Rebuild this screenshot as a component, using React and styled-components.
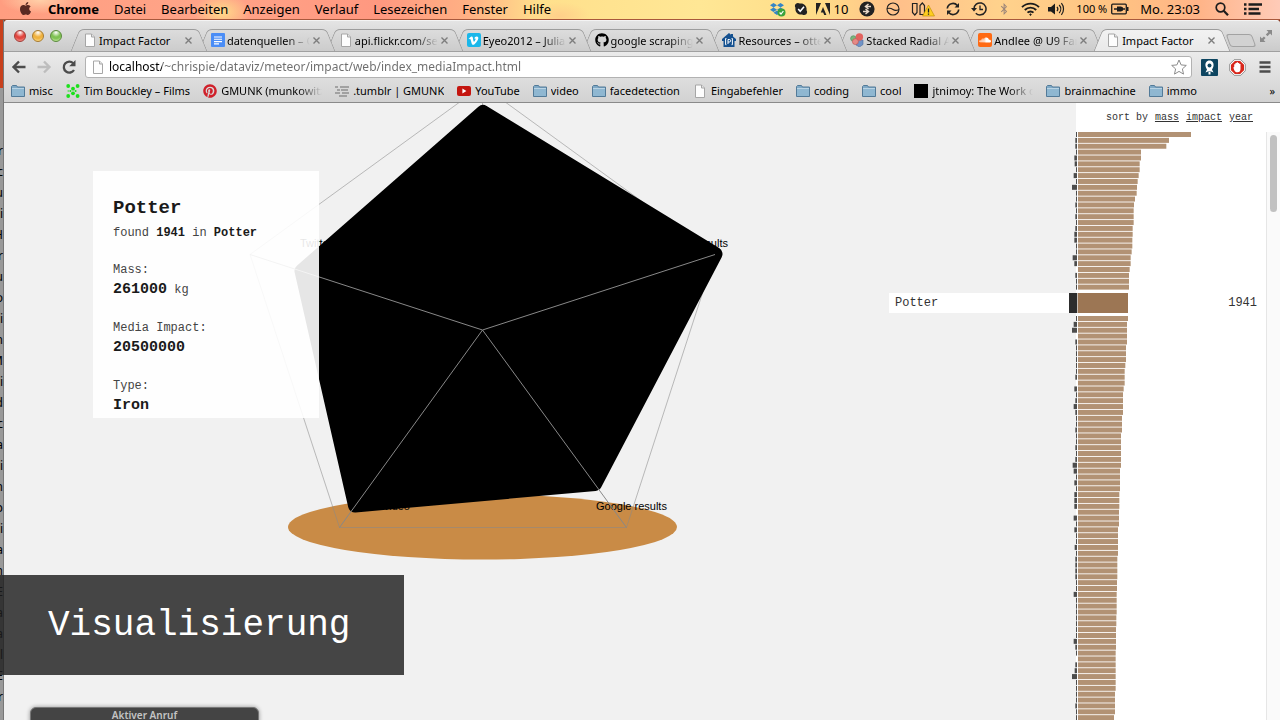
import React from 'react';
import styled, { createGlobalStyle, css } from 'styled-components';
import { FaApple, FaDropbox, FaSkype, FaBluetoothB, FaVimeoV, FaGithub, FaSoundcloud, FaPinterest } from 'react-icons/fa';

const ui = '"Noto Sans", "Open Sans", sans-serif';
const mono = '"Liberation Mono", "Courier New", monospace';

const GlobalStyle = createGlobalStyle`
  * { box-sizing: border-box; }
  body { margin: 0; background: #8a3a20; font-family: ${ui}; color: #000; overflow: hidden; }
  button, input { font: inherit; color: inherit; border: 0; padding: 0; margin: 0; background: none; }
  a { color: inherit; text-decoration: none; }
  svg { display: block; flex: none; }
`;

/* ---------- shell ---------- */
const Desktop = styled.div`
  position: relative;
  height: 100vh;
  display: flex;
  flex-direction: column;
  overflow: hidden;
`;
const Row = styled.div`
  flex: 1;
  min-height: 0;
  display: flex;
`;
const Behind = styled.div`
  width: 4px;
  overflow: hidden;
  background: linear-gradient(#c8401c 0 68px, #999 68px);
  border-right: 1px solid #777;
  padding-top: 120px;
  display: flex;
  flex-direction: column;
  align-items: flex-end;
  font-size: 12px;
  line-height: 21px;
`;
const Window = styled.div`
  flex: 1;
  min-width: 0;
  display: flex;
  flex-direction: column;
  background: #f1f1f1;
  border-radius: 4px 4px 0 0;
  overflow: hidden;
`;

/* ---------- menu bar ---------- */
const MenuBar = styled.header`
  height: 20px;
  flex: none;
  display: flex;
  justify-content: space-between;
  align-items: center;
  padding: 0 18px 2px;
  font-size: 13px;
  line-height: 18px;
  border-bottom: 1px solid #a8583c;
  background:
    radial-gradient(ellipse 28px 18px at 222px 12px, #ffe98acc, transparent),
    radial-gradient(ellipse 40px 14px at 40px 0, #ffd0a8, transparent),
    radial-gradient(ellipse 30px 14px at 560px 16px, #ffcf8a, transparent),
    linear-gradient(90deg, #ff9d80 0, #ffa488 200px, #ff9880 380px, #ffb184 470px, #ffe08c 540px, #ffe795 700px, #ffdc88 820px, #ffc08a 900px, #ffd28c 1000px, #ffc282 1120px, #ffb488 1200px, #ffcbb8 100%);
`;
const MenuGroup = styled.div`
  display: flex;
  align-items: center;
  gap: 15px;
`;
const MenuItem = styled.button`
  font-weight: ${(p) => (p.$bold ? 700 : 400)};
  white-space: nowrap;
`;
const StatusGroup = styled.div`
  display: flex;
  align-items: center;
  gap: ${(p) => p.$gap}px;
  white-space: nowrap;
`;
const Small = styled.span`
  font-size: 11px;
`;

/* ---------- tabs ---------- */
const TabBar = styled.div`
  height: 32px;
  flex: none;
  display: flex;
  align-items: flex-end;
  background: linear-gradient(#e4e4e4, #cbcbcb);
  border-top: 1px solid #f4f4f4;
  border-bottom: 1px solid #a0a0a0;
`;
const Lights = styled.div`
  width: 71px;
  flex: none;
  display: flex;
  gap: 6px;
  padding: 0 0 9px 10px;
`;
const Light = styled.button`
  width: 12px;
  height: 12px;
  border-radius: 50%;
  border: 1px solid ${(p) => p.$edge};
  background: radial-gradient(circle at 50% 15%, #fff 0, ${(p) => p.$fill} 45%, ${(p) => p.$fill} 60%, ${(p) => p.$glow} 100%);
`;
const Tabs = styled.nav`
  flex: 1;
  min-width: 0;
  display: flex;
`;
const edge = css`
  content: '';
  position: absolute;
  z-index: -1;
  top: 0;
  bottom: 0;
  background: ${(p) => (p.$active ? 'linear-gradient(#f2f2f2, #e9e9e9)' : 'linear-gradient(#dcdcdc, #cccccc)')};
  border-top: 1px solid #9c9c9c;
`;
const Tab = styled.div`
  position: relative;
  z-index: ${(p) => p.$z};
  isolation: isolate;
  flex: 1;
  min-width: 0;
  height: 22px;
  margin-bottom: ${(p) => (p.$active ? -1 : 0)}px;
  padding: 0 10px 0 8px;
  display: flex;
  align-items: center;
  gap: 2px;
  font-size: 11px;
  &::before {
    ${edge}
    left: 0;
    right: 40%;
    transform: skewX(-22deg);
    border-left: 1px solid #9c9c9c;
    border-top-left-radius: 5px;
  }
  &::after {
    ${edge}
    left: 40%;
    right: 0;
    transform: skewX(22deg);
    border-right: 1px solid #9c9c9c;
    border-top-right-radius: 5px;
  }
`;
const TabLabel = styled.button`
  flex: 1;
  min-width: 0;
  display: flex;
  align-items: center;
  gap: 2px;
  text-align: left;
`;
const Fade = styled.span`
  flex: 1;
  min-width: 0;
  max-width: ${(p) => (p.$max ? p.$max + 'px' : 'none')};
  overflow: hidden;
  white-space: nowrap;
  ${(p) => p.$on && css`mask-image: linear-gradient(90deg, #000 calc(100% - 24px), transparent);`}
`;
const Close = styled.button`
  width: 9px;
  height: 9px;
  flex: none;
`;
const TabEnd = styled.div`
  width: 54px;
  flex: none;
  display: flex;
  justify-content: space-between;
  padding: 0 7px 4px 2px;
`;
const NewTab = styled.button`
  width: 26px;
  height: 13px;
  align-self: flex-end;
  border: 1px solid #a2a2a2;
  border-radius: 3px;
  background: #d2d2d2;
  transform: skewX(20deg);
`;
const Expand = styled.button`
  width: 14px;
  height: 22px;
`;

/* ---------- toolbar ---------- */
const Toolbar = styled.div`
  height: 30px;
  flex: none;
  display: flex;
  align-items: center;
  padding: 0 7px;
  background: linear-gradient(#ebebeb, #dcdcdc);
`;
const IconButton = styled.button`
  width: 16px;
  height: 16px;
  margin-right: ${(p) => p.$gap || 0}px;
`;
const Omnibox = styled.label`
  flex: 1;
  min-width: 0;
  height: 22px;
  display: flex;
  align-items: center;
  gap: 4px;
  padding: 0 4px 0 5px;
  margin-right: 9px;
  background: #fff;
  border: 1px solid #b2b2b2;
  border-radius: 3px;
`;
const Url = styled.input`
  flex: 1;
  min-width: 0;
  font-size: 12px;
  line-height: 18px;
  color: transparent;
  background: linear-gradient(90deg, #000 53px, #6c6c6c 53px);
  -webkit-background-clip: text;
  background-clip: text;
`;

/* ---------- bookmarks ---------- */
const Bookmarks = styled.nav`
  height: 21px;
  flex: none;
  display: flex;
  align-items: center;
  gap: 13px;
  padding: 0 5px 3px 7px;
  font-size: 11px;
  background: linear-gradient(#dcdcdc, #d2d2d2);
  border-bottom: 1px solid #8a8a8a;
`;
const Bookmark = styled.a`
  display: flex;
  align-items: center;
  gap: 4px;
  white-space: nowrap;
`;
const More = styled.button`
  margin-left: auto;
`;
const BlackTile = styled.span`
  width: 14px;
  height: 14px;
  background: #000;
`;

/* ---------- page ---------- */
const Page = styled.main`
  flex: 1;
  min-height: 0;
  display: flex;
`;
const Canvas = styled.section`
  position: relative;
  flex: 1;
  min-width: 0;
  overflow: hidden;
`;
const Radar = styled.svg`
  width: 100%;
`;
const RadarLabel = styled.text`
  font: 11px "Liberation Sans", Arial, sans-serif;
  text-anchor: ${(p) => p.$anchor || 'start'};
`;
const Card = styled.article`
  position: absolute;
  left: 89px;
  top: 68px;
  width: 226px;
  height: 247px;
  overflow: hidden;
  padding: 25px 20px 0;
  background: rgba(255, 255, 255, 0.9);
  font-family: ${mono};
  font-size: 12px;
  color: #444;
  b, strong { color: #1a1a1a; }
`;
const CardTitle = styled.h1`
  margin: 0;
  font-size: 19px;
  line-height: 24px;
  color: #1a1a1a;
`;
const Found = styled.p`
  margin: 4px 0 0;
  line-height: 18px;
`;
const Facts = styled.dl`
  margin: 0;
`;
const Term = styled.dt`
  margin-top: 18px;
  line-height: 20px;
`;
const Value = styled.dd`
  margin: 0;
  line-height: 20px;
  strong { font-size: 15px; }
`;

const Side = styled.aside`
  position: relative;
  width: 204px;
  flex: none;
  background: #fff;
  font-family: ${mono};
  color: #333;
`;
const Sort = styled.div`
  height: 29px;
  display: flex;
  justify-content: flex-end;
  align-items: center;
  gap: 7px;
  padding-right: 27px;
  font-size: 10px;
  a { text-decoration: underline; }
`;
const Scroller = styled.div`
  display: flex;
`;
const List = styled.div`
  flex: 1;
  min-width: 0;
`;
const Track = styled.div`
  width: 14px;
  height: 100vh;
  padding: 3px 3px 0;
  background: #fafafa;
  border-left: 1px solid #e6e6e6;
`;
const Thumb = styled.div`
  width: 7px;
  height: 77px;
  border-radius: 4px;
  background: #c1c1c1;
`;
const Bars = styled.svg`
  width: 100%;
  overflow: visible;
`;
const Selected = styled.div`
  position: relative;
  height: 20px;
  margin: 3px 0;
  display: flex;
  align-items: center;
  font-size: 12px;
`;
const SelectedName = styled.div`
  position: absolute;
  right: 100%;
  width: 187px;
  height: 20px;
  display: flex;
  align-items: center;
  justify-content: space-between;
  padding-left: 6px;
  background: #fff;
`;
const Mark = styled.span`
  width: ${(p) => p.$w}px;
  height: 20px;
  background: ${(p) => p.$c};
`;
const Year = styled.span`
  margin-left: auto;
  padding-right: 9px;
`;

const Caption = styled.div`
  position: absolute;
  left: 0;
  bottom: 45px;
  width: 404px;
  height: 100px;
  padding: 2px 0 0 48px;
  display: flex;
  align-items: center;
  background: rgba(31, 31, 31, 0.82);
  color: #fff;
  font: 36px/40px ${mono};
`;
const Call = styled.div`
  position: absolute;
  left: 30px;
  bottom: -8px;
  width: 229px;
  height: 21px;
  border-radius: 6px;
  border: 1px solid #777;
  background: #444;
  box-shadow: 0 0 4px #0006;
  color: #c4c4c4;
  font-size: 10px;
  font-weight: 600;
  line-height: 15px;
  text-align: center;
`;

/* ---------- icons ---------- */
const FileIcon = () => (
  <svg width="14" height="14" viewBox="0 0 14 14"><path d="M2.5 1h6l3 3v9.5h-9z" fill="#fdfdfd" stroke="#a6a6a6" /><path d="M8.5 1v3h3" fill="#e4e4e4" stroke="#a6a6a6" /></svg>
);
const FolderIcon = () => (
  <svg width="14" height="14" viewBox="0 0 14 14"><path d="M.5 12.5v-10l1-1h4l1 1.5h7v9.5z" fill="#7fa9c6" stroke="#527a98" /><path d="M1 5h12v7H1z" fill="#8fb7d1" /><path d="M1 4.5h12" stroke="#b9d3e4" /></svg>
);
const DocsIcon = () => (
  <svg width="14" height="14" viewBox="0 0 14 14"><rect width="14" height="14" rx="1" fill="#4a8df6" /><path d="M3 4h8M3 6.3h8M3 8.6h8M3 10.9h5" stroke="#fff" strokeWidth="1.1" /></svg>
);
const TileIcon = styled.span`
  width: 14px;
  height: 14px;
  flex: none;
  display: flex;
  align-items: center;
  justify-content: center;
  color: #fff;
  border-radius: 2px;
  background: ${(p) => p.$c};
`;
const HouseIcon = () => (
  <svg width="14" height="14" viewBox="0 0 14 14"><path d="M7 0l2 1.8V1h2v2.6L14 6v2h-1.5v6h-11V8H0V6z" fill="#14508f" /><path d="M4.4 5.5H3.6v6.2h.8M9.6 5.5h.8v6.2h-.8M6 11V6.5h1.4a1.2 1.2 0 010 2.500H6" fill="none" stroke="#fff" strokeWidth="1" /></svg>
);
const RadialIcon = () => (
  <svg width="14" height="14" viewBox="0 0 14 14"><circle cx="3.4" cy="5.5" r="2.8" fill="#79b67c" stroke="#4e8c5b" strokeWidth=".6" /><path d="M6 7h7v4.5L9.5 14 6 12z" fill="#6f93c6" stroke="#4a6ba0" strokeWidth=".6" /><circle cx="9.4" cy="4" r="3.7" fill="#e2635f" /><circle cx="5.4" cy="8.6" r="3" fill="#e58a86" stroke="#c14e4c" strokeWidth=".6" /></svg>
);
const DotsIcon = () => (
  <svg width="14" height="14" viewBox="0 0 14 14" fill="#1ce01c"><circle cx="2.2" cy="2" r="1.9" /><circle cx="11.6" cy="2" r="1.9" /><circle cx="7" cy="4.700" r="1.900" /><circle cx="2.200" cy="7" r="0.700" /><circle cx="4.400" cy="7" r="1" /><circle cx="9.600" cy="7" r="1" /><circle cx="7" cy="9.300" r="1.900" /><circle cx="2.2" cy="12" r="1.9" /><circle cx="11.6" cy="12" r="1.9" /></svg>
);
const LinesIcon = () => (
  <svg width="14" height="14" viewBox="0 0 14 14"><path d="M0 3h3M5 3h9M2 6h3M6 6h7M0 9h5M7 9h7M4 12h8" stroke="#909090" strokeWidth="1.3" /></svg>
);
const TubeIcon = () => (
  <svg width="14" height="14" viewBox="0 0 14 14"><rect y="2" width="14" height="10" rx="2" fill="#c4150f" /><path d="M5.4 4.6v4.8L9.4 7z" fill="#fff" /></svg>
);
const CloseIcon = () => (
  <svg width="9" height="9" viewBox="0 0 9 9"><path d="M1.5 1.5l6 6M7.5 1.5l-6 6" stroke="#7d7d7d" strokeWidth="1.4" /></svg>
);

const tabs = [
  { label: 'Impact Factor', icon: <FileIcon /> },
  { label: 'datenquellen – Google', icon: <DocsIcon />, fade: true },
  { label: 'api.flickr.com/services', icon: <FileIcon />, fade: true },
  { label: 'Eyeo2012 – Julian O', icon: <TileIcon $c="#1ab7ea"><FaVimeoV size={11} /></TileIcon>, fade: true },
  { label: 'google scraping · G', icon: <FaGithub size={14} />, fade: true },
  { label: 'Resources – otterbox', icon: <HouseIcon />, fade: true },
  { label: 'Stacked Radial Area', icon: <RadialIcon />, fade: true },
  { label: 'Andlee @ U9 Family', icon: <TileIcon $c="#ff6a13"><FaSoundcloud size={12} /></TileIcon>, fade: true },
  { label: 'Impact Factor', icon: <FileIcon />, active: true },
];

const bookmarks = [
  { label: 'misc', icon: <FolderIcon /> },
  { label: 'Tim Bouckley – Films', icon: <DotsIcon /> },
  { label: 'GMUNK (munkowitz)', icon: <FaPinterest size={14} color="#d0202a" />, max: 101 },
  { label: '.tumblr | GMUNK', icon: <LinesIcon /> },
  { label: 'YouTube', icon: <TubeIcon /> },
  { label: 'video', icon: <FolderIcon /> },
  { label: 'facedetection', icon: <FolderIcon /> },
  { label: 'Eingabefehler', icon: <FileIcon /> },
  { label: 'coding', icon: <FolderIcon /> },
  { label: 'cool', icon: <FolderIcon /> },
  { label: 'jtnimoy: The Work of J', icon: <BlackTile />, max: 101 },
  { label: 'brainmachine', icon: <FolderIcon /> },
  { label: 'immo', icon: <FolderIcon /> },
];

/* [impact, mass] of each meteorite, in thirds of a pixel */
const before = [
  [3, 339], [5, 273], [5, 265], [3, 189], [8, 189], [7, 185], [3, 185], [10, 182], [3, 179], [15, 177], [3, 176], [3, 171], [5, 168], [3, 167],
  [5, 167], [3, 167], [5, 164], [8, 164], [8, 163], [3, 163], [3, 161], [13, 158], [8, 158], [0, 155], [5, 153], [3, 153], [3, 153],
];
const after = [
  [3, 150], [10, 147], [15, 147], [0, 147], [5, 147], [3, 144], [3, 144], [3, 144], [3, 142], [3, 140], [5, 140], [0, 140], [8, 137], [3, 135],
  [5, 135], [10, 135], [5, 135], [3, 132], [3, 132], [5, 132], [3, 129], [3, 129], [5, 129], [3, 129], [5, 129], [13, 129], [10, 126], [3, 126],
  [8, 126], [3, 126], [8, 124], [8, 124], [8, 124], [0, 123], [10, 123], [3, 123], [8, 120], [3, 120], [3, 120], [7, 120], [3, 120], [5, 118],
  [5, 118], [5, 118], [5, 118], [3, 117], [3, 117], [10, 116], [3, 116], [3, 116], [3, 116], [3, 115], [3, 115], [3, 114], [3, 114], [10, 114],
  [5, 114], [3, 113], [0, 113], [5, 113], [7, 113], [15, 113], [3, 113], [3, 113], [3, 111], [3, 111], [5, 111], [3, 111], [3, 108],
];
const PITCH = 5.87;

const BarChart = ({ rows, height }) => (
  <Bars height={height} aria-hidden="true">
    {rows.map(([impact, mass], i) => (
      <g key={i}>
        <rect x={1 - impact / 3} y={i * PITCH} width={impact / 3} height="5" fill="#4d4d4d" />
        <rect x="2" y={i * PITCH} width={mass / 3} height="5" fill="#b29274" />
      </g>
    ))}
  </Bars>
);

const behindLetters = ['r', 'c', 'u', 'i', 'H', 'r', 'u', 'o', 'i', 'n', 'M', 'i', 'd', 'c', 'a', 'i', 'n', 'p', 'i', 'a', 'n', 'E', 'a', 'a', 'l', 'E', 'r'];

export default function App() {
  return (
    <Desktop>
      <GlobalStyle />
      <MenuBar>
        <MenuGroup>
          <FaApple size={15} color="#5a2a22" />
          <MenuItem $bold>Chrome</MenuItem>
          {['Datei', 'Bearbeiten', 'Anzeigen', 'Verlauf', 'Lesezeichen', 'Fenster', 'Hilfe'].map((m) => (
            <MenuItem key={m}>{m}</MenuItem>
          ))}
        </MenuGroup>
        <StatusGroup $gap={11}>
          <StatusGroup $gap={8}>
            <svg width="16" height="16" viewBox="0 0 16 16"><g transform="translate(0 1)" color="#3585c6"><FaDropbox size={14} /></g><circle cx="11.5" cy="11.5" r="4" fill="#3ba33b" /><path d="M9.6 11.5l1.4 1.5 2.4-3" stroke="#fff" fill="none" strokeWidth="1.2" /></svg>
            <svg width="14" height="14" viewBox="0 0 14 14"><FaSkype size={14} color="#222" /><circle cx="7" cy="7" r="4.6" fill="#222" /><path d="M4.2 7l2 2.2L10 4.8" stroke="#fff" fill="none" strokeWidth="1.6" /></svg>
            <StatusGroup $gap={3}>
              <svg width="14" height="12" viewBox="0 0 14 12" fill="#222"><path d="M0 0h5L0 12zM9 0h5v12zM7 4l3.4 8H8.2l-1-2.5H4.8z" /></svg>
              <span>10</span>
            </StatusGroup>
          </StatusGroup>
          <svg width="16" height="16" viewBox="0 0 16 16"><circle cx="8" cy="8" r="7.6" fill="#222" /><path d="M9.500 3L6.500 5.500 9.500 8M6.500 5.500H12M6.500 8l3 2.500-3 2.500M9.500 10.500H4" stroke="#e8d8c8" fill="none" strokeWidth="1.500" /></svg>
          <svg width="14" height="14" viewBox="0 0 14 14" fill="none" stroke="#222" strokeWidth="1.1"><circle cx="7" cy="7" r="6" /><path d="M1 6.500c2-.5 4-.5 6 1s4 1 6 0" /></svg>
          <svg width="24" height="16" viewBox="0 0 24 16"><path d="M1.5 2.5h4.5v9L3.8 14l-2.3-2.5zM9 13.5h4.5v-9L11.300 2 9 4.500z" fill="none" stroke="#222" strokeWidth="1.2" /><path d="M17.500 4l6 11h-12z" fill="#ffce1f" stroke="#b98a00" strokeWidth=".6" /><path d="M17.500 7.500v4M17.500 12.500v1.300" stroke="#222" strokeWidth="1.300" /></svg>
          <svg width="14" height="14" viewBox="0 0 14 14"><path d="M1.300 6.500a5.700 5.700 0 0110-3M12.700 7.500a5.700 5.700 0 01-10 3" fill="none" stroke="#222" strokeWidth="1.700" /><path d="M13 1v4.500H8.500zM1 13V8.500h4.500z" fill="#222" /></svg>
          <svg width="16" height="14" viewBox="0 0 16 14"><path d="M3 7a6 6 0 111.800 4.200" fill="none" stroke="#222" strokeWidth="1.500" /><path d="M0 6h6L3 9.500z" fill="#222" /><path d="M9 3.500V7.500h3" fill="none" stroke="#222" strokeWidth="1.300" /></svg>
          <FaBluetoothB size={12} color="#9b8579" />
          <StatusGroup $gap={8}>
            <svg width="19" height="14" viewBox="0 0 19 14" fill="none" stroke="#1c1c1c" strokeWidth="1.900"><path d="M1 5.200a12 12 0 0117 0M3.800 8a8 8 0 0111.400 0M6.500 10.700a4.200 4.200 0 016 0" /><circle cx="9.500" cy="12.600" r=".7" fill="#1c1c1c" strokeWidth="1" /></svg>
            <svg width="17" height="14" viewBox="0 0 17 14"><path d="M0 5h3l4-3.500v11L3 9.500H0z" fill="#1c1c1c" /><path d="M9 4.800a3.500 3.500 0 010 4.400M11.200 3a6 6 0 010 8M13.400 1.200a9 9 0 010 11.600" fill="none" stroke="#1c1c1c" strokeWidth="1.200" /></svg>
          </StatusGroup>
          <StatusGroup $gap={4}>
            <Small>100 %</Small>
            <svg width="18" height="12" viewBox="0 0 18 12"><rect x=".7" y="1.200" width="14.600" height="9.600" rx="1" fill="none" stroke="#1c1c1c" strokeWidth="1.300" /><path d="M16 4h1.500v4H16z" fill="#1c1c1c" /><path d="M3 6h3M11 6h3" stroke="#1c1c1c" strokeWidth="1.500" /><path d="M6 3.500h4l2 1v3l-2 1H6z" fill="#1c1c1c" /></svg>
          </StatusGroup>
          <StatusGroup $gap={15}>
            <span>Mo. 23:03</span>
            <svg width="14" height="14" viewBox="0 0 14 14" fill="none" stroke="#1c1c1c"><circle cx="5.500" cy="5.500" r="4.300" strokeWidth="1.700" /><path d="M8.700 8.700l4.300 4.500" strokeWidth="2.200" /></svg>
            <svg width="18" height="12" viewBox="0 0 18 12"><path d="M0 1.500h2.500M0 6h2.500M0 10.500h2.500M4.500 1.500H18M4.500 6H15M4.500 10.500h12" stroke="#1c1c1c" strokeWidth="2.300" /></svg>
          </StatusGroup>
        </StatusGroup>
      </MenuBar>

      <Row>
        <Behind aria-hidden="true">
          {behindLetters.map((l, i) => <span key={i}>{l}</span>)}
        </Behind>
        <Window>
          <TabBar>
            <Lights>
              <Light aria-label="Schließen" $edge="#a03a36" $fill="#e2463f" $glow="#ffb0a8" />
              <Light aria-label="Minimieren" $edge="#a87a2e" $fill="#f0b23e" $glow="#ffeaa0" />
              <Light aria-label="Zoomen" $edge="#5a8a3c" $fill="#7fc252" $glow="#d8f7b4" />
            </Lights>
            <Tabs>
              {tabs.map((t, i) => (
                <Tab key={i} $active={t.active} $z={t.active ? 20 : 10 - i}>
                  <TabLabel>
                    {t.icon}
                    <Fade $on={t.fade}>{t.label}</Fade>
                  </TabLabel>
                  <Close aria-label="Tab schließen"><CloseIcon /></Close>
                </Tab>
              ))}
            </Tabs>
            <TabEnd>
              <NewTab aria-label="Neuer Tab" />
              <Expand aria-label="Vollbild">
                <svg width="14" height="14" viewBox="0 0 14 14" fill="#8a8a8a"><path d="M7.500 1H13v5.500l-1.900-1.900-2.600 2.600-1.700-1.700 2.600-2.600zM6.500 13H1V7.500l1.900 1.900 2-2 1.700 1.700-2 2z" /></svg>
              </Expand>
            </TabEnd>
          </TabBar>

          <Toolbar>
            <IconButton aria-label="Zurück" $gap={9}>
              <svg width="16" height="16" viewBox="0 0 16 16" fill="none" stroke="#4c4c4c" strokeWidth="2.400"><path d="M14.500 8H3M8 2.500L2.500 8 8 13.500" /></svg>
            </IconButton>
            <IconButton aria-label="Vor" $gap={9}>
              <svg width="16" height="16" viewBox="0 0 16 16" fill="none" stroke="#bdbdbd" strokeWidth="2.400"><path d="M1.500 8H13M8 2.500L13.500 8 8 13.500" /></svg>
            </IconButton>
            <IconButton aria-label="Neu laden" $gap={8}>
              <svg width="16" height="16" viewBox="0 0 16 16"><path d="M13 11a5.500 5.500 0 11-.8-6.800" fill="none" stroke="#4c4c4c" strokeWidth="2.300" /><path d="M14.500 1v6.300H8.200z" fill="#4c4c4c" /></svg>
            </IconButton>
            <Omnibox>
              <FileIcon />
              <Url aria-label="Adresse" defaultValue="localhost/~chrispie/dataviz/meteor/impact/web/index_mediaImpact.html" />
              <svg width="16" height="16" viewBox="0 0 16 16"><path d="M8 1l2.100 4.900 5.200.5-3.900 3.500 1.100 5.200L8 12.400l-4.500 2.700 1.100-5.200L.7 6.400l5.200-.5z" fill="#fff" stroke="#8c8c8c" /></svg>
            </Omnibox>
            <IconButton aria-label="Erweiterung" $gap={12}>
              <svg width="17" height="17" viewBox="0 0 17 17"><rect width="17" height="17" rx="1" fill="#0d4560" /><path d="M8.500 1.500c3 0 4.500 2.500 4 5.500-.3 1.500-1 2.500-1.500 3.500l1.500 3-2.500-1H7l-2.500 1 1.500-3C5.500 9.500 4.800 8.500 4.500 7c-.5-3 1-5.500 4-5.500z" fill="#fff" /><circle cx="8.500" cy="6.500" r="2" fill="#0d4560" /><path d="M7.500 13h2v2.500h-2z" fill="#fff" /></svg>
            </IconButton>
            <IconButton aria-label="Werbeblocker" $gap={12}>
              <svg width="17" height="17" viewBox="0 0 17 17"><path d="M5.200.7h6.600l4.500 4.500v6.600l-4.500 4.500H5.200L.7 11.800V5.200z" fill="#fff" stroke="#777" strokeWidth=".8" /><path d="M5.800 2h5.400L15 5.800v5.400L11.200 15H5.800L2 11.200V5.800z" fill="#d8281c" /><path d="M5.200 8V5.200h1.200V4h1.300v-.7H9V4h1.300v1h1.200v5c0 2-1 3.300-3 3.300-1.800 0-2.600-.8-3.300-2.300L4.300 8.600z" fill="#fff" /></svg>
            </IconButton>
            <IconButton aria-label="Menü">
              <svg width="16" height="16" viewBox="0 0 16 16"><path d="M2.500 3.500h11M2.500 8h11M2.500 12.500h11" stroke="#4c4c4c" strokeWidth="2.300" /></svg>
            </IconButton>
          </Toolbar>

          <Bookmarks>
            {bookmarks.map((b) => (
              <Bookmark key={b.label} href="#">
                {b.icon}
                <Fade $on={!!b.max} $max={b.max}>{b.label}</Fade>
              </Bookmark>
            ))}
            <More aria-label="Weitere Lesezeichen">»</More>
          </Bookmarks>

          <Page>
            <Canvas>
              <Radar viewBox="4 103 1072 617">
                <ellipse cx="482.500" cy="527" rx="194.500" ry="32.500" fill="#c98b46" />
                <path d="M482.500 85.500L715 254.500 626.500 527.500H339.500L250 254.500z" fill="none" stroke="#888" strokeOpacity=".55" />
                <path d="M482.500 330V85" stroke="#888" strokeOpacity=".55" />
                <RadarLabel x="300" y="247">Twitter</RadarLabel>
                <RadarLabel x="728" y="247" $anchor="end">Flickr results</RadarLabel>
                <RadarLabel x="596" y="510">Google results</RadarLabel>
                <RadarLabel x="410" y="510" $anchor="end">Vimeo video</RadarLabel>
                <path d="M483 112L715.500 254 595 484 355 505.500 301.500 271z" fill="#000" stroke="#000" strokeWidth="14" strokeLinejoin="round" />
                <path d="M482.500 330L715 254.500M482.500 330L626.500 527.500M482.500 330L339.500 527.500M482.500 330L250 254.500" stroke="#888" />
              </Radar>
              <Card>
                <CardTitle>Potter</CardTitle>
                <Found>found <b>1941</b> in <b>Potter</b></Found>
                <Facts>
                  <Term>Mass:</Term>
                  <Value><strong>261000</strong> kg</Value>
                  <Term>Media Impact:</Term>
                  <Value><strong>20500000</strong></Value>
                  <Term>Type:</Term>
                  <Value><strong>Iron</strong></Value>
                </Facts>
              </Card>
            </Canvas>
            <Side>
              <Sort>
                <span>sort by</span>
                <a href="#mass">mass</a>
                <a href="#impact">impact</a>
                <a href="#year">year</a>
              </Sort>
              <Scroller>
                <List>
                  <BarChart rows={before} height={158} />
                  <Selected>
                    <SelectedName><span>Potter</span><Mark $w={7} $c="#2d2d2d" /></SelectedName>
                    <Mark $w={1} $c="#2d2d2d" />
                    <Mark $w={1} $c="#c9c0b8" />
                    <Mark $w={50} $c="#9c7654" />
                    <Year>1941</Year>
                  </Selected>
                  <BarChart rows={after} height={406} />
                </List>
                <Track><Thumb /></Track>
              </Scroller>
            </Side>
          </Page>
        </Window>
      </Row>

      <Caption>Visualisierung</Caption>
      <Call>Aktiver Anruf</Call>
    </Desktop>
  );
}
